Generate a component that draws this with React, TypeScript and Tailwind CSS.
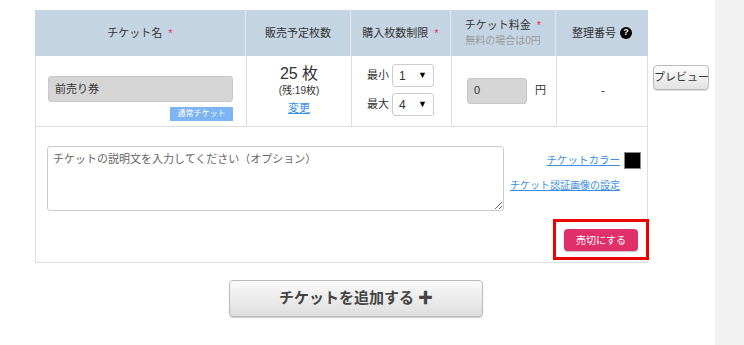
import { useState } from 'react';

const font = { fontFamily: '"Liberation Sans", "Noto Sans CJK JP", sans-serif' };

function Req() {
  return <span className="ml-1.5 text-[#e8334a] text-[11px]">*</span>;
}

function MiniSelect({ value }: { value: string }) {
  return (
    <div className="w-[42px] h-[23px] border border-[#ccc] rounded-[3px] bg-white flex items-center justify-between pl-1.5 pr-1.5 text-[12px] text-[#333]">
      <span>{value}</span>
      <span className="text-[9px] text-black">▼</span>
    </div>
  );
}

export default function App() {
  const [desc, setDesc] = useState('');

  return (
    <div className="flex w-[744px] h-[345px] bg-white text-[#333]" style={font}>
      <div className="w-[715px] pl-[35px] pt-[10px]">
        <div className="flex items-start">
          <div className="w-[613px]">
            {/* Header */}
            <div className="grid grid-cols-[211px_105px_100px_105px_92px] h-[46px] bg-[#c5d4e3] text-[11px] text-[#333]">
              <div className="flex items-center justify-center border-r border-[#e6ecf2]">
                チケット名<Req />
              </div>
              <div className="flex items-center justify-center border-r border-[#e6ecf2]">
                販売予定枚数
              </div>
              <div className="flex items-center justify-center border-r border-[#e6ecf2]">
                購入枚数制限<Req />
              </div>
              <div className="flex flex-col items-center justify-center border-r border-[#e6ecf2] leading-[15px]">
                <div>
                  チケット料金<Req />
                </div>
                <div className="text-[#999] text-[10px]">無料の場合は0円</div>
              </div>
              <div className="flex items-center justify-center">
                整理番号
                <span className="ml-1 w-[12px] h-[12px] rounded-full bg-black text-white text-[9px] font-bold flex items-center justify-center">
                  ?
                </span>
              </div>
            </div>

            {/* Row */}
            <div className="grid grid-cols-[211px_105px_100px_105px_92px] h-[71px] border-x border-b border-[#ddd]">
              <div className="border-r border-[#ddd] pl-[12px] pr-[13px] pt-[20px] flex flex-col items-end">
                <div className="w-full h-[26px] bg-[#d5d5d5] border border-[#c8c8c8] rounded-[3px] flex items-center pl-[6px] text-[11px] text-[#333]">
                  前売り券
                </div>
                <div className="mt-[5px] w-[63px] h-[14px] bg-[#7cb4f4] text-white text-[8px] flex items-center justify-center whitespace-nowrap">
                  通常チケット
                </div>
              </div>
              <div className="border-r border-[#ddd] flex flex-col items-center pt-[9px]">
                <div className="text-[16px] leading-[18px] text-[#333]">25 枚</div>
                <div className="text-[10px] leading-[14px] mt-[1px]">(残:19枚)</div>
                <a className="text-[11px] leading-[16px] mt-[2px] text-[#3c8fdf] underline">変更</a>
              </div>
              <div className="border-r border-[#ddd] flex flex-col items-start pt-[8px] gap-[6px] pl-[15px]">
                <div className="flex items-center gap-[3px] text-[11px]">
                  <span>最小</span>
                  <MiniSelect value="1" />
                </div>
                <div className="flex items-center gap-[3px] text-[11px]">
                  <span>最大</span>
                  <MiniSelect value="4" />
                </div>
              </div>
              <div className="border-r border-[#ddd] flex items-center pl-[15px] pb-[1px]">
                <div className="w-[60px] h-[26px] bg-[#d5d5d5] border border-[#c8c8c8] rounded-[3px] flex items-center pl-[6px] text-[11px]">
                  0
                </div>
                <span className="ml-[8px] text-[11px]">円</span>
              </div>
              <div className="flex items-center justify-center text-[11px] pb-[1px]">-</div>
            </div>

            {/* Description area */}
            <div className="h-[136px] border-x border-b border-[#ddd] flex pt-[19px] pl-[11px] pr-[6px]">
              <textarea
                value={desc}
                onChange={(e) => setDesc(e.target.value)}
                placeholder="チケットの説明文を入力してください（オプション）"
                className="w-[457px] h-[65px] border border-[#ccc] rounded-[3px] px-[5px] py-[4px] text-[11px] text-[#333] placeholder:text-[#666] resize-y"
                style={font}
              />
              <div className="flex-1 flex flex-col items-end">
                <div className="flex items-center mt-[6px]">
                  <a className="text-[10.5px] text-[#3c8fdf] underline whitespace-nowrap">チケットカラー</a>
                  <span className="ml-[4px] w-[17px] h-[17px] bg-black border border-[#888]" />
                </div>
                <a className="mt-[9px] mr-[21px] text-[10px] text-[#3c8fdf] underline whitespace-nowrap">
                  チケット認証画像の設定
                </a>
                <div className="mt-[26px] border-[3px] border-[#ec0000] w-[96px] h-[41px] flex items-start justify-center pt-[7px] -mr-[8px]">
                  <button className="w-[74px] h-[22px] rounded-[4px] bg-[#e0306a] text-white text-[10px] whitespace-nowrap shadow-[0_1px_1px_rgba(0,0,0,0.25)]">
                    売切にする
                  </button>
                </div>
              </div>
            </div>
          </div>

          <button className="ml-[5px] mt-[55px] w-[56px] h-[25px] rounded-[4px] border border-[#bbb] bg-gradient-to-b from-[#fdfdfd] to-[#e2e2e2] text-[11px] text-[#333] whitespace-nowrap px-0 shadow-[0_1px_1px_rgba(0,0,0,0.15)]">
            プレビュー
          </button>
        </div>

        <div className="flex mt-[17px]">
          <button className="ml-[194px] w-[254px] h-[37px] rounded-[4px] border border-[#bbb] bg-gradient-to-b from-[#fafafa] to-[#dedede] text-[15px] font-bold text-[#444] shadow-[0_1px_1px_rgba(0,0,0,0.2)]">
            チケットを追加する ✚
          </button>
        </div>
      </div>
      <div className="flex-1 bg-[#f1f1f1]" />
    </div>
  );
}
